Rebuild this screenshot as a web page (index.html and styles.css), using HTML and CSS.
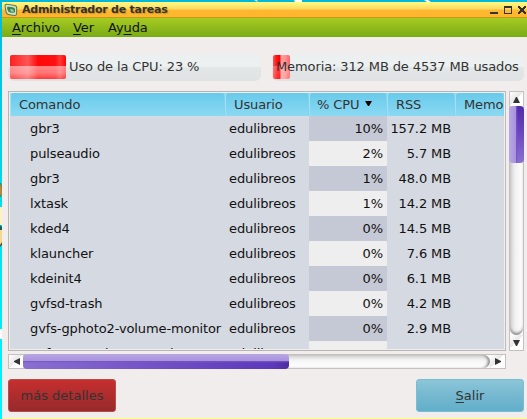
FILE: index.html
```html
<!DOCTYPE html>
<html lang="es">
<head>
<meta charset="utf-8">
<title>Administrador de tareas</title>
<link rel="stylesheet" href="styles.css">
</head>
<body>
<svg class="wallpaper" width="527" height="419" viewBox="0 0 527 419">
  <path d="M0 183q2 2 2 6v5l-2 3z" fill="#d3a94f" stroke="#715020" stroke-width=".7"/>
  <path d="M0 207h2v18H0z" fill="#fff0c0"/>
  <path d="M0 225l2 2v3H0z" fill="#205c58"/>
  <path d="M0 230h2v13l-2 3z" fill="#f5d990"/>
  <path d="M0 245l2-3v3l-2 2zM0 202l2 4" fill="#5b4a25"/>
  <path d="M0 329h2v10H0zM294 0h8v2h-7zM424 0h4l3 2h-4zM254 0h3l1 2z" fill="#fff"/>
</svg>
<div class="window">
  <header class="titlebar">
    <svg class="app-icon" width="14" height="14" viewBox="0 0 14 14">
      <path d="M.5 3Q.5.500 3 .8L11 2Q13.500 2.500 13.300 5L13 11q-.3 2.500-3 2L4 12Q2 11.500 1.500 9z" fill="#5c7a52"/>
      <path d="M1.500 3q0-1.500 2-1.200L10.500 3Q12.300 3.300 12.200 5L12 10.500q0 2-2 1.500L4.500 11Q3 10.500 2.500 8.500z" fill="#cfe3c4"/>
      <path d="M3 5q0-1.500 2-1.200L9.500 4.500q1.500.3 1.500 2V8.500q0 1.500-2 1.300L6 9.500Q4 9 3 5z" fill="#3f8054"/>
      <path d="M6 6l3 .5 1 2.200L7 8.500z" fill="#9fd49c"/>
    </svg>
    <span class="title">Administrador de tareas</span>
    <svg class="controls" width="38" height="10" viewBox="0 0 38 10" shape-rendering="crispEdges" fill="#333">
      <path d="M1 7h8v2H1z"/>
      <path d="M15 1h8v8h-8zM16 3v5h6V3z" fill-rule="evenodd"/>
      <path d="M29 1h2v1h1v1h2V2h1V1h2v2h-1v1h-1v2h1v1h1v2h-2V8h-1V7h-2v1h-1v1h-2V7h1V6h1V4h-1V3h-1z"/>
    </svg>
  </header>
  <nav class="menu">
    <span class="m1"><u>A</u>rchivo</span><span class="m2"><u>V</u>er</span><span class="m3">Ay<u>u</u>da</span>
  </nav>
  <main class="content">
    <div class="meters">
      <div class="meter"><i class="fill cpu"></i><span class="cpu-label">Uso de la CPU: 23 %</span></div>
      <div class="meter"><i class="fill mem"></i><span class="mem-label">Memoria: 312 MB de 4537 MB usados</span></div>
    </div>
    <div class="panes">
      <div class="table">
        <div class="row head"><b>Comando</b><b>Usuario</b><b>% CPU<svg width="7" height="5" viewBox="0 0 7 5"><path d="M0 0h7L4 5H3z"/></svg></b><b>RSS</b><b>Memo</b></div>
        <div class="row"><span>gbr3</span><span>edulibreos</span><span>10%</span><span>157.2 MB</span></div>
        <div class="row"><span>pulseaudio</span><span>edulibreos</span><span>2%</span><span>5.7 MB</span></div>
        <div class="row"><span>gbr3</span><span>edulibreos</span><span>1%</span><span>48.0 MB</span></div>
        <div class="row"><span>lxtask</span><span>edulibreos</span><span>1%</span><span>14.2 MB</span></div>
        <div class="row"><span>kded4</span><span>edulibreos</span><span>0%</span><span>14.5 MB</span></div>
        <div class="row"><span>klauncher</span><span>edulibreos</span><span>0%</span><span>7.6 MB</span></div>
        <div class="row"><span>kdeinit4</span><span>edulibreos</span><span>0%</span><span>6.1 MB</span></div>
        <div class="row"><span>gvfsd-trash</span><span>edulibreos</span><span>0%</span><span>4.2 MB</span></div>
        <div class="row"><span>gvfs-gphoto2-volume-monitor</span><span>edulibreos</span><span>0%</span><span>2.9 MB</span></div>
        <div class="row last"><span>gvfs-goa-volume-monitor</span><span>edulibreos</span><span></span><span></span></div>
      </div>
      <div class="vscroll">
        <div class="arrow"><svg width="7" height="6" viewBox="0 0 7 6"><path d="M3 0h1l3 6H0z"/></svg></div>
        <div class="track"><div class="thumb"></div></div>
        <div class="arrow"><svg width="7" height="6" viewBox="0 0 7 6"><path d="M0 0h7L4 6H3z"/></svg></div>
      </div>
      <div class="hscroll">
        <div class="arrow"><svg width="6" height="7" viewBox="0 0 6 7"><path d="M0 3v1l6 3V0z"/></svg></div>
        <div class="track"><div class="thumb"></div></div>
        <div class="arrow"><svg width="6" height="7" viewBox="0 0 6 7"><path d="M6 3v1L0 7V0z"/></svg></div>
      </div>
    </div>
    <footer class="actions">
      <button class="more">más detalles</button>
      <button class="exit"><u>S</u>alir</button>
    </footer>
  </main>
</div>
</body>
</html>
```
FILE: styles.css
```css
* { box-sizing: border-box; }
body {
  margin: 0;
  width: 527px;
  height: 419px;
  overflow: hidden;
  padding: 2px 0 0 2px;
  background: linear-gradient(#00b8dc, #00e5f0 60%, #00f4ff);
  font: 13px/16px "DejaVu Sans", sans-serif;
  letter-spacing: -.11px;
  color: #111;
}
.wallpaper { position: absolute; left: 0; top: 0; }
.window {
  position: relative;
  height: 417px;
  background: #f1edec;
  border-bottom: 1px solid #ffff80;
}
u { text-decoration-thickness: 1px; text-underline-offset: 2px; text-decoration-skip-ink: none; }
.titlebar {
  height: 16px;
  display: flex;
  align-items: center;
  padding-left: 2px;
  background: linear-gradient(#ffff80, #fff27a 2px, #ffda62 7px, #ffb830 8px, #ffb52e 15px, #c69814 15px);
}
.title {
  margin-left: 4px;
  font-weight: bold;
  font-size: 11px;
  line-height: 14px;
  letter-spacing: -.25px;
  color: #333;
  text-shadow: 1px 1px 1px #8a660066;
}
.controls { margin-left: auto; }
.menu {
  height: 19px;
  display: flex;
  padding-left: 10px;
  line-height: 19px;
  background: linear-gradient(#a8cb23, #78ab14);
}
.m1 { width: 61px; }
.m2 { width: 35px; }
.content { padding: 17px 3px 6px 6px; color: #333; }
.meters { display: flex; gap: 11px; }
.meter {
  width: 253px;
  height: 27px;
  padding: 1px 1px 2px 2px;
  border-radius: 6px;
  display: flex;
  align-items: center;
  background: linear-gradient(#eceff0, #edf1f2 12px, #e2e6e7 14px, #dfe3e4);
}
.fill { height: 24px; border-radius: 2px; flex: none; }
.cpu {
  width: 56px;
  background:
    linear-gradient(#ff000000 11px, #ffffff80 11px, #ffffff70 18px, #ffffff30),
    linear-gradient(90deg, #ff2020, #ff5555 18px, #ff0808 28px, #ff1010 45px, #ff3838 50px, #ff0000);
}
.mem {
  width: 17px;
  margin-left: -1px;
  background:
    linear-gradient(#ff000000 11px, #ffffff40 11px, #ffffff20),
    linear-gradient(90deg, #ff5050, #ff1010 4px, #ff0000 7px, #ffa0a0 8px, #ff9494 12px, #ff6060);
}
.cpu-label { margin-left: 3px; }
.mem-label { margin-left: -14px; white-space: nowrap; }
.meter + .meter { width: 252px; }
.panes {
  margin-top: 10px;
  display: grid;
  grid-template: 260px 15px / 498px 15px;
  gap: 3px;
}
.table {
  border: 1px solid #b8b4b3;
  border-right-color: #c3bab8;
  box-shadow: inset 0 0 0 1px #efeeee;
  padding: 1px;
  overflow: hidden;
  color: #111;
}
.row {
  height: 25px;
  display: grid;
  grid-template-columns: 215px 84px 78px 68px 49px;
  line-height: 25px;
  background: #d5d9e2;
  white-space: nowrap;
}
.last { height: 8px; overflow: hidden; }
.row span:nth-child(1) { padding-left: 20px; }
.row span:nth-child(2) { padding-left: 4px; }
.row span:nth-child(3) { padding-right: 4px; text-align: right; background: #c5c8d5; }
.row:nth-child(odd) span:nth-child(3) { background: #eeeeee; }
.row span:nth-child(4) { padding-right: 4px; text-align: right; }
.head { height: 23px; line-height: 23px; color: #333; background: #8fd9f2; }
.head b {
  font-weight: normal;
  padding-left: 8px;
  border-radius: 3px;
  overflow: hidden;
  background: linear-gradient(#68caeb, #8bd9f2);
  border-left: 1px solid #a2e1f5;
  border-right: 1px solid #7fd3ee;
}
.head b:nth-child(3) { padding-left: 7px; }
.head b svg { margin-left: 6px; vertical-align: 3px; }
.vscroll, .hscroll { display: flex; border: 1px solid #c5c1c1; background: #f8f8f8; }
.vscroll { flex-direction: column; }
.arrow { flex: none; display: flex; align-items: center; justify-content: center; background: linear-gradient(135deg, #fff, #e8e8e8 45%, #fff 50%); }
.arrow svg { fill: #333; }
.vscroll .arrow { height: 15px; }
.hscroll .arrow { width: 15px; }
.track { flex: 1; }
.vscroll .track { margin-top: -1px; border-radius: 0 0 7px 7px; background: linear-gradient(90deg, #d0d0d0, #f0f0f0 5px, #fff); box-shadow: inset 0 -3px 3px -1px #888; }
.hscroll .track { margin-left: -1px; border-radius: 0 7px 7px 0; background: linear-gradient(#d0d0d0, #f4f4f4 5px, #fff); box-shadow: inset -3px 0 3px -1px #888; }
.vscroll .thumb {
  width: 15px;
  height: 57px;
  margin-left: -1px;
  border-radius: 4px;
  background: linear-gradient(90deg, #b9a7e4, #a892dc 7px, #7656c4 7px, #7656c400 9px), linear-gradient(#4f2ba9, #6945bd 25px, #8a70d0);
}
.hscroll .thumb {
  width: 266px;
  height: 15px;
  margin-top: -1px;
  border-radius: 4px;
  background: linear-gradient(#b9a7e4, #a892dc 7px, #7656c4 7px, #7656c400 9px), linear-gradient(90deg, #8a70d0, #7757c8 40%, #5f3dbd 85%, #5c39bb 94%, #4f2ba0);
}
.actions { margin-top: 10px; display: flex; justify-content: space-between; }
button {
  width: 108px;
  height: 33px;
  padding: 0;
  border-radius: 3px;
  font: inherit;
  letter-spacing: 0;
  color: #333;
}
.more { border: 1px solid #bd4949; background: linear-gradient(#c62f2f, #972a2c); }
.exit { border: 1px solid #79bdd2; background: linear-gradient(#8cc6d9, #75b8d0 50%, #62afca); }
```
